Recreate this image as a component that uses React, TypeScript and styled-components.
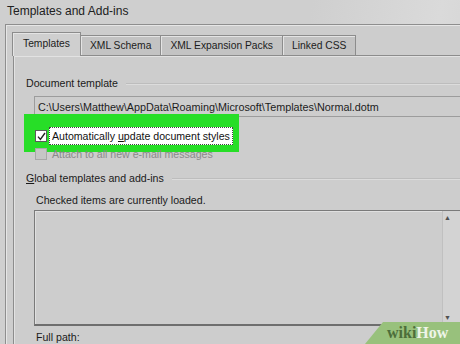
import styled, { createGlobalStyle } from 'styled-components';

const GlobalStyle = createGlobalStyle`
  html, body {
    margin: 0;
    padding: 0;
    background: #cfcfcf;
  }
  body {
    font-family: 'Liberation Sans', Arial, sans-serif;
    color: #1a1a1a;
  }
`;

const tabs = ['Templates', 'XML Schema', 'XML Expansion Packs', 'Linked CSS'];

const App = () => {
  return (
    <Window>
      <GlobalStyle />
      <TitleBar>Templates and Add-ins</TitleBar>
      <Frame>
        <TabStrip>
          {tabs.map((t, i) => (
            <Tab key={t} $active={i === 0}>
              {t}
            </Tab>
          ))}
        </TabStrip>
        <Panel>
          <GroupHeader>
            <span>Document template</span>
          </GroupHeader>
          <PathBox>C:\Users\Matthew\AppData\Roaming\Microsoft\Templates\Normal.dotm</PathBox>
          <CheckRow>
            <Highlight />
            <CheckBox>
              <svg width='9' height='9' viewBox='0 0 9 9'>
                <path d='M1 4.6 L3.4 7.4 L8 1' fill='none' stroke='#222' strokeWidth='1.4' />
              </svg>
            </CheckBox>
            <FocusLabel>
              Automatically <u>u</u>pdate document styles
            </FocusLabel>
          </CheckRow>
          <CheckRow $disabled>
            <CheckBox $disabled />
            <PlainLabel>Attach to all new e-mail messages</PlainLabel>
          </CheckRow>
          <GroupHeader $top={10}>
            <span>
              <u>G</u>lobal templates and add-ins
            </span>
          </GroupHeader>
          <Hint>Checked items are currently loaded.</Hint>
          <ListBox>
            <ListItems />
            <ScrollBar>
              <Arrow>&#9650;</Arrow>
              <Arrow>&#9660;</Arrow>
            </ScrollBar>
          </ListBox>
          <Hint $top={5}>Full path:</Hint>
        </Panel>
      </Frame>
      <Watermark>
        <WikiText>wiki</WikiText>
        <HowText>How</HowText>
      </Watermark>
    </Window>
  );
};

const Window = styled.div`
  position: relative;
  display: flex;
  flex-direction: column;
  width: 460px;
  height: 344px;
  overflow: hidden;
  background: linear-gradient(100deg, #cfcfcf 60%, #dadada 85%, #d2d2d2);
`;

const TitleBar = styled.div`
  flex-shrink: 0;
  height: 24px;
  padding-left: 7px;
  font-size: 12px;
  line-height: 22px;
  color: #202020;
`;

const Frame = styled.div`
  flex: 1;
  display: flex;
  flex-direction: column;
  margin-left: 5px;
  padding: 7px 0 0 7px;
  border-top: 1px solid #8e8e8e;
  border-left: 1px solid #8e8e8e;
  box-shadow: inset 1px 1px 0 #e6e6e6;
  background: #cdcdcd;
`;

const TabStrip = styled.div`
  display: flex;
  flex-shrink: 0;
  align-items: flex-end;
  height: 24px;
  position: relative;
  z-index: 1;
`;

const Tab = styled.div<{ $active?: boolean }>`
  box-sizing: border-box;
  height: ${p => (p.$active ? 24 : 21)}px;
  padding: 0 ${p => (p.$active ? 10 : 9)}px;
  font-size: 10.3px;
  line-height: ${p => (p.$active ? 22 : 19)}px;
  background: ${p => (p.$active ? '#cfcfcf' : '#c3c3c3')};
  border: 1px solid #8c8c8c;
  border-bottom: ${p => (p.$active ? 'none' : '1px solid #8c8c8c')};
  box-shadow: inset 1px 1px 0 #e4e4e4;
  margin-left: -1px;
  color: #1c1c1c;
  white-space: nowrap;
`;

const Panel = styled.div`
  flex: 1;
  display: flex;
  flex-direction: column;
  padding: 20px 0 0 12px;
  border-top: 1px solid #8c8c8c;
  border-left: 1px solid #8c8c8c;
  box-shadow: inset 1px 1px 0 #e2e2e2;
  margin-top: -1px;
  background: #cdcdcd;
  & > * {
    flex-shrink: 0;
  }
`;

const GroupHeader = styled.div<{ $top?: number }>`
  display: flex;
  align-items: center;
  gap: 8px;
  margin-top: ${p => p.$top ?? 0}px;
  font-size: 10.6px;
  line-height: 14px;
  white-space: nowrap;
  &::after {
    content: '';
    flex: 1;
    height: 1px;
    background: #bdbdbd;
    box-shadow: 0 1px 0 #dcdcdc;
  }
`;

const PathBox = styled.div`
  box-sizing: border-box;
  margin: 6px 0 0 8px;
  height: 21px;
  padding-left: 3px;
  border: 1px solid #9c9c9c;
  border-right: none;
  font-size: 10.8px;
  line-height: 20px;
  white-space: nowrap;
  color: #1c1c1c;
`;

const CheckRow = styled.div<{ $disabled?: boolean }>`
  position: relative;
  display: flex;
  align-items: center;
  margin: ${p => (p.$disabled ? '2px' : '10px')} 0 0 8px;
  height: ${p => (p.$disabled ? 14 : 18)}px;
  color: ${p => (p.$disabled ? '#8a8a8a' : '#111')};
`;

const Highlight = styled.div`
  position: absolute;
  left: -10px;
  top: -13px;
  width: 215px;
  height: 38px;
  background: #27de27;
`;

const CheckBox = styled.div<{ $disabled?: boolean }>`
  position: relative;
  box-sizing: border-box;
  width: 12px;
  height: 12px;
  margin-left: 1px;
  display: flex;
  align-items: center;
  justify-content: center;
  border: 1px solid ${p => (p.$disabled ? '#a8a8a8' : '#5a5a5a')};
  background: ${p => (p.$disabled ? '#c6c6c6' : '#ffffff')};
`;

const FocusLabel = styled.span`
  position: relative;
  margin-left: 2px;
  padding: 0 2px;
  height: 18px;
  line-height: 16px;
  font-size: 10.6px;
  background: #ffffff;
  border: 1px dotted #444;
  box-sizing: border-box;
  white-space: nowrap;
`;

const PlainLabel = styled.span`
  margin-left: 5px;
  font-size: 10.6px;
  white-space: nowrap;
`;

const Hint = styled.div<{ $top?: number }>`
  margin: ${p => p.$top ?? 9}px 0 0 10px;
  font-size: 10.6px;
  line-height: 12px;
  white-space: nowrap;
`;

const ListBox = styled.div`
  display: flex;
  margin: 4px 0 0 8px;
  height: 116px;
  box-sizing: border-box;
  border: 1px solid #7a7a7a;
  border-right: none;
  border-bottom: 2px solid #6e6e6e;
  box-shadow: inset 1px 1px 0 #e0e0e0;
`;

const ListItems = styled.div`
  flex: 1;
`;

const ScrollBar = styled.div`
  width: 17px;
  display: flex;
  flex-direction: column;
  justify-content: space-between;
  border-left: 1px solid #c0c0c0;
  background: #d3d3d3;
  padding: 3px 0 2px;
`;

const Arrow = styled.span`
  font-size: 7px;
  line-height: 8px;
  color: #505050;
  padding-left: 1px;
`;

const Watermark = styled.div`
  position: absolute;
  right: 0;
  bottom: 0;
  width: 95px;
  height: 22px;
  padding-left: 22px;
  box-sizing: border-box;
  display: flex;
  align-items: center;
  background: #98c17c;
  clip-path: polygon(18px 0, 100% 0, 100% 100%, 0 100%);
  font-family: 'Liberation Serif', 'DejaVu Serif', serif;
  font-weight: bold;
  font-size: 16px;
`;

const WikiText = styled.span`
  color: #4d6e3a;
`;

const HowText = styled.span`
  color: #eef5e8;
`;

export default App;
